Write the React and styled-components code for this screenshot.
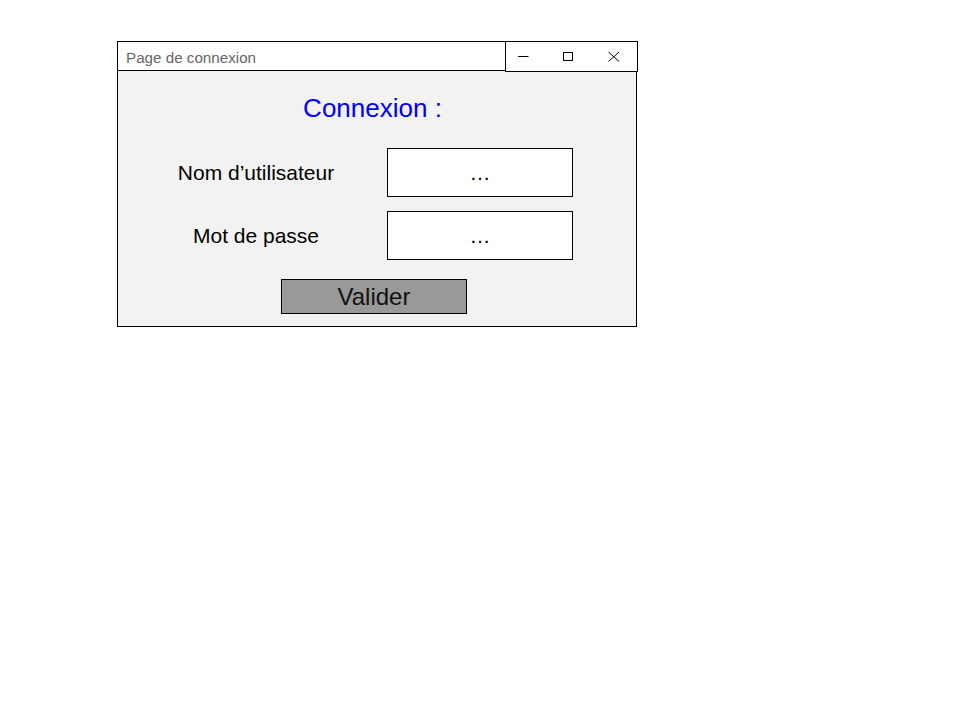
import React from 'react';
import styled, { createGlobalStyle } from 'styled-components';

const GlobalStyle = createGlobalStyle`
	html, body {
		margin: 0;
		padding: 0;
		background: #fff;
	}
	body {
		font-family: 'Liberation Sans', Arial, sans-serif;
	}
	* {
		box-sizing: border-box;
	}
`;

const Window = styled.div`
	position: relative;
	margin: 41px 0 0 117px;
	width: 520px;
	height: 286px;
	border: 1px solid #000;
	display: flex;
	flex-direction: column;
`;

const TitleBar = styled.div`
	height: 29px;
	border-bottom: 1px solid #000;
	background: #fff;
	padding: 3px 0 0 8px;
`;

const Caption = styled.div`
	font-size: 15.2px;
	line-height: 25px;
	color: #666;
`;

const Controls = styled.div`
	position: absolute;
	top: -1px;
	right: -2px;
	width: 133px;
	height: 31px;
	border: 1px solid #000;
	background: #fff;
	display: flex;
	align-items: flex-start;
	gap: 33px;
	padding: 8px 0 0 12px;
`;

const Body = styled.div`
	flex: 1;
	background: #f2f2f2;
	display: flex;
	flex-direction: column;
	padding-top: 22px;
`;

const Heading = styled.h1`
	margin: 0;
	padding-right: 9px;
	font-size: 26px;
	line-height: 30px;
	font-weight: normal;
	color: #0000ff;
	text-align: center;
`;

const Fields = styled.div`
	margin-top: 25px;
	padding-left: 38px;
	display: grid;
	grid-template-columns: 200px 186px;
	column-gap: 31px;
	row-gap: 14px;
`;

const Label = styled.div`
	display: flex;
	align-items: center;
	justify-content: center;
	padding-top: 1px;
	font-size: 21px;
	color: #000;
`;

const Field = styled.div`
	height: 49px;
	border: 1px solid #000;
	background: #fff;
	display: flex;
	align-items: center;
	justify-content: center;
	padding-top: 1px;
	font-size: 21px;
	color: #000;
`;

const SubmitButton = styled.button`
	align-self: center;
	margin: 19px 6px 0 0;
	width: 186px;
	height: 35px;
	padding: 0;
	border: 1px solid #000;
	background: #999;
	font-family: inherit;
	font-size: 24px;
	line-height: 27px;
	color: #111;
`;

const Icon = ({ children }) => (
	<svg width="12" height="12" viewBox="0 0 12 12" fill="none" stroke="#000" strokeWidth="1">
		{children}
	</svg>
);

const App = () => {
	return (
		<>
			<GlobalStyle />
			<Window>
				<TitleBar>
					<Caption>Page de connexion</Caption>
				</TitleBar>
				<Controls>
					<Icon>
						<line x1="0" y1="6.5" x2="10.5" y2="6.5" />
					</Icon>
					<Icon>
						<rect x="0.5" y="2.5" width="9" height="8" />
					</Icon>
					<Icon>
						<path d="M0.5 2L11 11.5M11 2L0.5 11.5" />
					</Icon>
				</Controls>
				<Body>
					<Heading>Connexion :</Heading>
					<Fields>
						<Label>Nom d’utilisateur</Label>
						<Field>…</Field>
						<Label>Mot de passe</Label>
						<Field>…</Field>
					</Fields>
					<SubmitButton type="submit">Valider</SubmitButton>
				</Body>
			</Window>
		</>
	);
};

export default App;
